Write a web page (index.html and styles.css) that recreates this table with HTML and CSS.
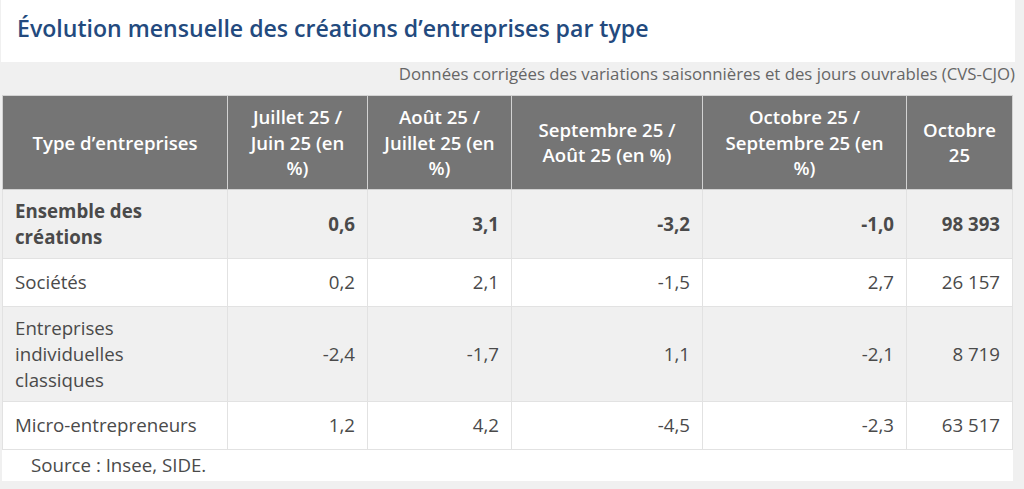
FILE: index.html
```html
<!DOCTYPE html>
<html lang="fr">
<head>
<meta charset="utf-8">
<title>Évolution mensuelle des créations d’entreprises par type</title>
<link rel="stylesheet" href="styles.css">
</head>
<body>
<div class="page">
  <div class="title-box">
    <h2 class="title">Évolution mensuelle des créations d’entreprises par type</h2>
  </div>
  <p class="subtitle">Données corrigées des variations saisonnières et des jours ouvrables (CVS-CJO)</p>
  <table class="data">
    <colgroup>
      <col class="c1"><col class="c2"><col class="c3"><col class="c4"><col class="c5"><col class="c6">
    </colgroup>
    <thead>
      <tr>
        <th>Type d’entreprises</th>
        <th>Juillet 25 / Juin 25 (en %)</th>
        <th>Août 25 / Juillet 25 (en %)</th>
        <th>Septembre 25 / Août 25 (en %)</th>
        <th>Octobre 25 / Septembre 25 (en %)</th>
        <th>Octobre 25</th>
      </tr>
    </thead>
    <tbody>
      <tr class="alt total">
        <td class="label">Ensemble des créations</td>
        <td>0,6</td><td>3,1</td><td>-3,2</td><td>-1,0</td><td>98 393</td>
      </tr>
      <tr>
        <td class="label">Sociétés</td>
        <td>0,2</td><td>2,1</td><td>-1,5</td><td>2,7</td><td>26 157</td>
      </tr>
      <tr class="alt">
        <td class="label">Entreprises individuelles classiques</td>
        <td>-2,4</td><td>-1,7</td><td>1,1</td><td>-2,1</td><td>8 719</td>
      </tr>
      <tr>
        <td class="label">Micro-entrepreneurs</td>
        <td>1,2</td><td>4,2</td><td>-4,5</td><td>-2,3</td><td>63 517</td>
      </tr>
    </tbody>
  </table>
  <div class="source">Source : Insee, SIDE.</div>
</div>
</body>
</html>
```

FILE: styles.css
```css
html, body {
  margin: 0;
  padding: 0;
  background: #f0f0f0;
}

body {
  font-family: "Open Sans", "Noto Sans", "Liberation Sans", sans-serif;
  color: #4a4a4a;
}

.page {
  width: 1024px;
}

.title-box {
  background: #ffffff;
  width: 1014px;
  height: 62px;
  margin-left: 1px;
  box-sizing: border-box;
  padding: 11px 0 0 16px;
}

.title {
  margin: 0;
  font-size: 23.1px;
  line-height: 34px;
  font-weight: 600;
  color: #234a7e;
}

.subtitle {
  margin: 0;
  width: 1015px;
  text-align: right;
  font-size: 16.8px;
  line-height: 23px;
  color: #666666;
}

.data {
  margin: 10px 0 0 2px;
  width: 1010px;
  table-layout: fixed;
  border-collapse: collapse;
  font-size: 18.7px;
}

.c1 { width: 225px; }
.c2 { width: 140px; }
.c3 { width: 144px; }
.c4 { width: 191px; }
.c5 { width: 204px; }
.c6 { width: 106px; }

.data th {
  background: #757575;
  color: #ffffff;
  font-size: 18.6px;
  font-weight: 600;
  line-height: 25.5px;
  text-align: center;
  vertical-align: middle;
  padding: 8px 14px;
  border: 1px solid #d2d2d2;
}

.data td {
  height: 31px;
  padding: 8px 12px;
  line-height: 26px;
  text-align: right;
  vertical-align: middle;
  border: 1px solid #e2e2e2;
  background: #ffffff;
}

.data tr.alt td {
  background: #f0f0f0;
}

.data td.label {
  text-align: left;
}

.data tr.total td {
  font-weight: 700;
}

.source {
  width: 1011px;
  margin-left: 2px;
  height: 31px;
  background: #ffffff;
  box-sizing: border-box;
  padding-left: 29px;
  font-size: 18.7px;
  line-height: 30px;
  color: #4a4a4a;
}
```
